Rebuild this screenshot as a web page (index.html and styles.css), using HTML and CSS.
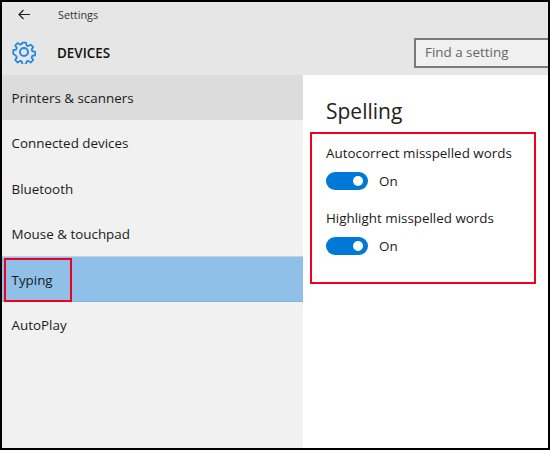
FILE: index.html
```html
<!DOCTYPE html>
<html lang="en">

<head>
    <title>Settings</title>
    <link rel="stylesheet" href="styles.css">
</head>

<body>
    <div class="window">
        <header class="top-bar">
            <div class="title-row">
                <svg class="back-icon" width="12" height="11" viewBox="0 0 12 11" fill="none" stroke="#222" stroke-width="1.2">
                    <path d="M12 5.5H1M5.5 1 1 5.5 5.5 10" />
                </svg>
                <span class="app-name">Settings</span>
            </div>
            <div class="section-row">
                <svg class="gear-icon" width="24" height="24" viewBox="0 0 24 24" fill="none" stroke="#1e88e0" stroke-width="1.9" stroke-linejoin="round">
                    <path d="M10 1.5h4l.6 3.2 1.9.8 2.7-1.8 2.8 2.8-1.8 2.7.8 1.9 3.2.6v4l-3.2.6-.8 1.9 1.8 2.7-2.8 2.8-2.7-1.8-1.9.8-.6 3.2h-4l-.6-3.2-1.9-.8-2.7 1.8-2.8-2.8 1.8-2.7-.8-1.9L-.2 14v-4l3.2-.6.8-1.9L2 4.8 4.8 2l2.7 1.8 1.9-.8z" transform="translate(1.4 1.2) scale(.9)" />
                    <circle cx="12" cy="12" r="4" />
                </svg>
                <h1 class="section-name">DEVICES</h1>
                <div class="search-box">Find a setting</div>
            </div>
        </header>

        <div class="main">
            <nav class="side-nav">
                <div class="nav-item hovered">Printers &amp; scanners</div>
                <div class="nav-item">Connected devices</div>
                <div class="nav-item">Bluetooth</div>
                <div class="nav-item">Mouse &amp; touchpad</div>
                <div class="nav-item selected">Typing</div>
                <div class="nav-item">AutoPlay</div>
            </nav>

            <section class="content">
                <h2>Spelling</h2>
                <div class="setting">
                    <div class="setting-label">Autocorrect misspelled words</div>
                    <div class="toggle-row">
                        <span class="toggle"><span class="knob"></span></span>
                        <span>On</span>
                    </div>
                </div>
                <div class="setting">
                    <div class="setting-label">Highlight misspelled words</div>
                    <div class="toggle-row">
                        <span class="toggle"><span class="knob"></span></span>
                        <span>On</span>
                    </div>
                </div>
            </section>
        </div>

        <!-- Red annotation boxes drawn over the window -->
        <div class="callout callout-typing"></div>
        <div class="callout callout-spelling"></div>
    </div>
</body>

</html>
```

FILE: styles.css
```css
html,
body {
    margin: 0;
    height: 100%;
}

body {
    font-family: "Open Sans", "Noto Sans", Arial, sans-serif;
    font-size: 13.4px;
    color: #1a1a1a;
}

.window {
    position: relative;
    box-sizing: border-box;
    width: 550px;
    height: 450px;
    border: 2px solid #000000;
    display: flex;
    flex-direction: column;
    background-color: #ffffff;
    overflow: hidden;
}

.top-bar {
    height: 73px;
    flex-shrink: 0;
    background-color: #e6e6e6;
}

.title-row {
    display: flex;
    align-items: center;
    height: 24px;
    padding-left: 16px;
}

.app-name {
    margin-left: 28px;
    font-size: 10.8px;
    color: #333;
}

.section-row {
    display: flex;
    align-items: center;
    height: 30px;
    margin-top: 12px;
    padding-left: 10px;
}

.gear-icon {
    margin-bottom: 2px;
}

.section-name {
    margin: 0 0 0 21px;
    font-size: 13.4px;
    font-weight: 600;
    color: #111;
}

.search-box {
    box-sizing: border-box;
    width: 140px;
    height: 30px;
    margin-left: auto;
    margin-right: -6px;
    padding-left: 9px;
    line-height: 25px;
    border: 2px solid #7a7a7a;
    background-color: #f0f0f0;
    color: #666;
}

.main {
    flex: 1;
    display: flex;
}

.side-nav {
    width: 301px;
    background-color: #f1f1f1;
}

.nav-item {
    box-sizing: border-box;
    height: 45.25px;
    padding-left: 9.5px;
    line-height: 47px;
}

.nav-item.hovered {
    background-color: #dcdcdc;
}

.nav-item.selected {
    height: 46px;
    background-color: #90c0e8;
    border-top: 1px solid #b5d5f0;
    border-bottom: 1px solid #80b6e6;
    line-height: 46px;
}

.content {
    flex: 1;
    padding-left: 23px;
}

.content h2 {
    margin: 20px 0 16px;
    font-size: 21px;
    font-weight: 400;
    line-height: 32px;
    color: #222;
}

.setting {
    margin-bottom: 17px;
}

.setting-label {
    line-height: 20px;
}

.toggle-row {
    display: flex;
    align-items: center;
    gap: 11px;
    margin-top: 8px;
    line-height: 20px;
}

.toggle {
    box-sizing: border-box;
    display: flex;
    align-items: center;
    justify-content: flex-end;
    width: 42px;
    height: 18px;
    padding-right: 5px;
    border-radius: 9px;
    background-color: #0078d7;
}

.knob {
    width: 10px;
    height: 10px;
    border-radius: 50%;
    background-color: #ffffff;
}

.callout {
    position: absolute;
    box-sizing: border-box;
    border: 2px solid #f0001e;
}

.callout-typing {
    left: 2px;
    top: 256px;
    width: 68px;
    height: 44px;
}

.callout-spelling {
    left: 308px;
    top: 130px;
    width: 226px;
    height: 152px;
}
```
